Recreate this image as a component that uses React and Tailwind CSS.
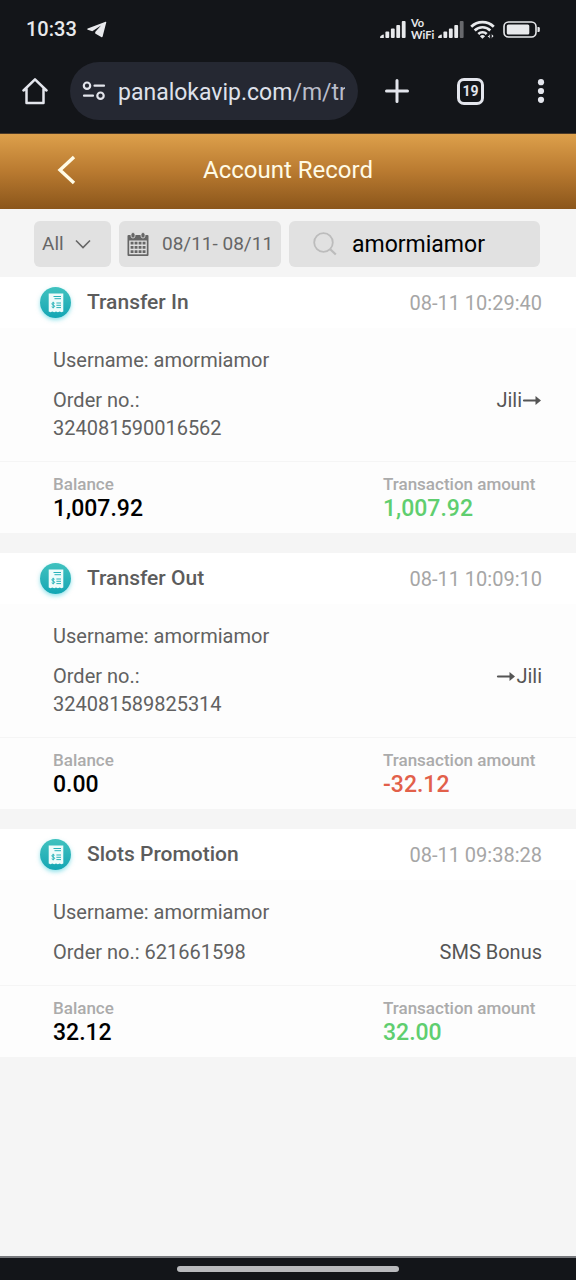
import React from "react";

const records = [
  { title: "Transfer In", time: "08-11 10:29:40", user: "amormiamor", order: "324081590016562", note: "Jili", arrow: "after", balance: "1,007.92", amount: "1,007.92", positive: true },
  { title: "Transfer Out", time: "08-11 10:09:10", user: "amormiamor", order: "324081589825314", note: "Jili", arrow: "before", balance: "0.00", amount: "-32.12", positive: false },
  { title: "Slots Promotion", time: "08-11 09:38:28", user: "amormiamor", order: "621661598", note: "SMS Bonus", balance: "32.12", amount: "32.00", positive: true },
];

function Signal({ weak }) {
  return (
    <svg viewBox="0 0 26 17" className="h-[17px] w-[26px]" fill="#e8e9ec" aria-hidden="true">
      <path d="M.5 17h3.300v-3.600C2 13.600.2 14.800 0 16.200 0 16.700.200 17 .5 17Z" />
      <rect x="5.400" y="10.500" width="3.800" height="6.500" rx=".9" />
      <rect x="10.900" y="7.500" width="3.800" height="9.500" rx=".9" />
      <rect x="16.300" y="4" width="3.800" height="13" rx=".9" />
      <rect x="21.800" y="0" width="3.800" height="17" rx=".9" opacity={weak ? 0.4 : 1} />
    </svg>
  );
}

function StatusBar() {
  return (
    <div className="flex h-[58px] items-center pl-[26px] pr-9 text-[#e8e9ec]">
      <span className="text-xl font-medium">10:33</span>
      <svg viewBox="0 0 20 17" className="ml-[10px] h-[17px] w-5" aria-hidden="true">
        <path d="M18.600.7.700 7.600c-.6.300-.6.900 0 1.100l4.600 1.500L14 4.600 8.200 11v1.500l6 3.500c.8.400 1.300.2 1.500-.7l3.600-14c.1-.5-.2-.8-.7-.6Z" fill="currentColor" />
      </svg>
      <div className="ml-auto flex items-center">
        <Signal />
        <div className="ml-[5px] w-6 font-['Lato',sans-serif] text-[11px] font-bold leading-3">
          <div>Vo</div>
          <div>WiFi</div>
        </div>
        <div className="ml-[3px]">
          <Signal weak />
        </div>
        <svg viewBox="0 0 25 19" className="ml-[6px] h-[19px] w-[25px]" fill="none" stroke="currentColor" aria-hidden="true">
          <path d="M1.200 6.700a16 16 0 0 1 22.600 0" strokeWidth="2.700" />
          <path d="M4.700 10.500a11 11 0 0 1 15.600 0" strokeWidth="2.700" />
          <path d="M8.300 14a6 6 0 0 1 8.400 0" strokeWidth="2.600" />
          <path d="m12.500 18.800-2.600-2.500a3.700 3.700 0 0 1 5.200 0Z" fill="currentColor" stroke="none" />
          <path d="M20.200 13.500v5.500l-2.700-2.400zM21.300 18.900v-5.500l2.700 2.700z" fill="currentColor" stroke="#131519" strokeWidth=".8" />
        </svg>
        <svg viewBox="0 0 37 17" className="ml-2 h-[17px] w-[37px]" aria-hidden="true">
          <rect x="1" y="1" width="32" height="15" rx="4.500" fill="none" stroke="currentColor" strokeWidth="1.600" />
          <rect x="3.800" y="3.600" width="22.500" height="9.800" rx="1.500" fill="currentColor" />
          <path d="M34.500 6h1a1.300 1.300 0 0 1 1.300 1.300v2.400a1.300 1.300 0 0 1-1.300 1.300h-1z" fill="currentColor" />
        </svg>
      </div>
    </div>
  );
}

function BrowserBar() {
  return (
    <div className="flex h-[76px] items-start border-b border-[#4b3a28] pl-[22px] pr-[31px] pt-1 text-[#e3e5ec]">
      <button type="button" aria-label="Home" className="flex h-[58px] w-[26px] shrink-0 items-center">
        <svg viewBox="0 0 26 28" className="h-7 w-[26px]" fill="none" stroke="currentColor" strokeWidth="2.500" strokeLinejoin="round" strokeLinecap="round">
          <path d="M1.500 13.500 13 2.300l11.500 11.200M4.500 11.500v14.500h17V11.500" />
        </svg>
      </button>
      <button type="button" aria-label="Address bar" className="ml-[22px] flex h-[58px] min-w-0 flex-1 items-center rounded-full bg-[#252832] pl-3 pr-[13px]">
        <svg viewBox="0 0 24 20" className="h-5 w-6 shrink-0" fill="none" stroke="currentColor" strokeWidth="2.200" strokeLinecap="round" aria-hidden="true">
          <circle cx="5" cy="4.700" r="3.200" />
          <path d="M12.500 4.700h9.500M2 14.700h9" />
          <circle cx="18.500" cy="14.700" r="3.200" />
        </svg>
        <span className="ml-3 min-w-0 flex-1 overflow-hidden whitespace-nowrap pt-1 text-left text-[23px] text-[#dfe1ea]">
          panalokavip.com<span className="text-[#b9bdca]">/m/tr</span>
        </span>
      </button>
      <button type="button" aria-label="New tab" className="ml-[27px] flex h-[58px] w-6 shrink-0 items-center">
        <svg viewBox="0 0 24 24" className="h-6 w-6" stroke="currentColor" strokeWidth="3" strokeLinecap="round">
          <path d="M12 1.500v21M1.500 12h21" />
        </svg>
      </button>
      <button type="button" aria-label="Open tabs" className="ml-12 flex h-[58px] w-[27px] shrink-0 items-center">
        <span className="flex h-[27px] w-[27px] items-center justify-center rounded-[7px] border-[3px] border-current text-sm font-bold">19</span>
      </button>
      <button type="button" aria-label="Menu" className="ml-[53px] flex h-[58px] w-2 shrink-0 items-center">
        <svg viewBox="0 0 8 24" className="h-6 w-2" fill="currentColor">
          <circle cx="4" cy="3.200" r="3.100" />
          <circle cx="4" cy="12" r="3.100" />
          <circle cx="4" cy="20.800" r="3.100" />
        </svg>
      </button>
    </div>
  );
}

function CalendarIcon() {
  return (
    <svg viewBox="0 0 22 24" className="h-6 w-[22px]" aria-hidden="true">
      <path d="M1.500 3h19a1 1 0 0 1 1 1v19a1 1 0 0 1-1 1h-19a1 1 0 0 1-1-1V4a1 1 0 0 1 1-1Z" fill="#666" />
      <path d="M2.200 8.500h17.600v13.800H2.200z" fill="#e1e1e1" />
      <g fill="#666" stroke="#e1e1e1" strokeWidth=".8">
        <rect x="4" y=".5" width="4" height="5.500" rx="2" />
        <rect x="14" y=".5" width="4" height="5.500" rx="2" />
      </g>
      <g stroke="#666" strokeWidth="2.800" strokeDasharray="2.900 1.100">
        <path d="M3.600 11.200h15M3.600 15.400h15M3.600 19.600h15" />
      </g>
    </svg>
  );
}

function ReceiptIcon() {
  return (
    <span className="flex h-[31px] w-[31px] items-center justify-center rounded-full bg-linear-to-b from-[#3fc2bf] to-[#10a6b4] shadow-[0_2px_4px_rgba(40,200,215,0.5)]">
      <svg viewBox="0 0 16 20" className="h-5 w-4" aria-hidden="true">
        <path d="M.7.500h14.600v18l-1.800.8-1.850-.8-1.800.8-1.850-.8-1.800.8-1.850-.8-1.800.8L.7 18.500Z" fill="#effcfb" />
        <g stroke="#28b2b9" fill="none" strokeWidth="1">
          <path d="M5.500 3.500H13M6.500 5.700H13M8.400 10H13M8.400 12.300H13M8.400 14.600H13" />
          <path d="M6.600 10.300c-.8-.8-2.800-.6-2.800.6 0 1.400 2.900.9 2.900 2.400 0 1.200-2.100 1.400-3 .5M5.200 8.800v6.500" />
        </g>
      </svg>
    </span>
  );
}

function Arrow() {
  return (
    <svg viewBox="0 0 20 12" className="h-3 w-5" aria-hidden="true">
      <path d="M2 6.500H15" stroke="#555" strokeWidth="2.200" strokeLinecap="round" />
      <path d="M13.500 2 19 6.500 13.500 11Z" fill="#555" />
    </svg>
  );
}

function Record({ item }) {
  return (
    <article className="bg-[#fdfdfd]">
      <header className="flex h-[51px] items-center bg-white pl-10 pr-[34px]">
        <ReceiptIcon />
        <h2 className="ml-4 text-[21px] font-medium text-[#5c5c5c]">{item.title}</h2>
        <time className="ml-auto text-xl text-[#a6a6a6]">{item.time}</time>
      </header>
      <div className="pb-[19px] pl-[53px] pr-[34px] pt-[18px] text-xl leading-7 text-[#616161]">
        <p>Username: {item.user}</p>
        <div className="mt-3 flex justify-between">
          <p className="w-[200px]">Order no.: {item.order}</p>
          <p className="flex h-7 items-center text-[#555]">
            {item.arrow === "before" && <Arrow />}
            {item.note}
            {item.arrow === "after" && <Arrow />}
          </p>
        </div>
      </div>
      <dl className="flex justify-between border-t border-[#f5f5f5] pb-3 pl-[53px] pr-[34px] pt-[10px] font-medium">
        <div>
          <dt className="text-[17px] leading-6 text-[#ababab]">Balance</dt>
          <dd className="text-[23px] leading-[25px] text-black">{item.balance}</dd>
        </div>
        <div className="w-[159px]">
          <dt className="text-[17px] leading-6 text-[#ababab]">Transaction amount</dt>
          <dd className={item.positive ? "text-[23px] leading-[25px] text-[#5fce6f]" : "text-[23px] leading-[25px] text-[#e2604a]"}>{item.amount}</dd>
        </div>
      </dl>
    </article>
  );
}

export default function App() {
  return (
    <div className="flex min-h-screen flex-col bg-[#f5f5f5] font-['Roboto',sans-serif]">
      <div className="bg-[#131519]">
        <StatusBar />
        <BrowserBar />
      </div>
      <header className="grid h-[75px] grid-cols-[1fr_auto_1fr] items-center bg-linear-to-b from-[#dda04b] via-[#b97a30] to-[#8b561b] pb-[3px] text-[#fffbe6]">
        <button type="button" aria-label="Back" className="ml-14 h-8 w-5">
          <svg viewBox="0 0 20 32" className="h-8 w-5" fill="none" stroke="currentColor" strokeWidth="3.400">
            <path d="M18 3 4 16l14 13" />
          </svg>
        </button>
        <h1 className="text-2xl">Account Record</h1>
      </header>
      <form className="flex h-[68px] items-start gap-2 pl-[34px] pr-9 pt-3 text-[#666]">
        <div className="grid h-[46px] w-[77px] items-center rounded-md bg-[#e1e1e1]">
          <select aria-label="Record type" className="col-start-1 row-start-1 h-full appearance-none bg-transparent pl-2 text-[19px]">
            <option>All</option>
          </select>
          <svg viewBox="0 0 16 10" className="pointer-events-none col-start-1 row-start-1 mr-5 h-[10px] w-4 justify-self-end" fill="none" stroke="currentColor" strokeWidth="1.600" aria-hidden="true">
            <path d="m1 1.500 7 7 7-7" />
          </svg>
        </div>
        <button type="button" className="flex h-[46px] w-[162px] items-center gap-[13px] rounded-md bg-[#e1e1e1] pl-2 text-[19px]">
          <CalendarIcon />
          <span className="whitespace-nowrap">08/11- 08/11</span>
        </button>
        <label className="flex h-[46px] min-w-0 flex-1 items-center gap-[15px] rounded-md bg-[#e1e1e1] pl-6">
          <svg viewBox="0 0 24 24" className="h-6 w-6 shrink-0" fill="none" stroke="#bcbcbc" strokeWidth="1.800" aria-hidden="true">
            <circle cx="10.500" cy="10.500" r="9.300" />
            <path d="m17.200 17.200 5.600 5.300" strokeWidth="2.200" />
          </svg>
          <input aria-label="Search username" defaultValue="amormiamor" className="w-full min-w-0 bg-transparent pt-[2px] text-[23px] text-black outline-none" />
        </label>
      </form>
      <main className="flex flex-1 flex-col gap-5">
        {records.map((item) => (
          <Record key={item.order} item={item} />
        ))}
      </main>
      <footer className="flex h-6 items-center justify-center border-t-2 border-[#77797d] bg-[#131519]">
        <div className="h-[6px] w-[222px] rounded-full bg-[#b9babd]" />
      </footer>
    </div>
  );
}
